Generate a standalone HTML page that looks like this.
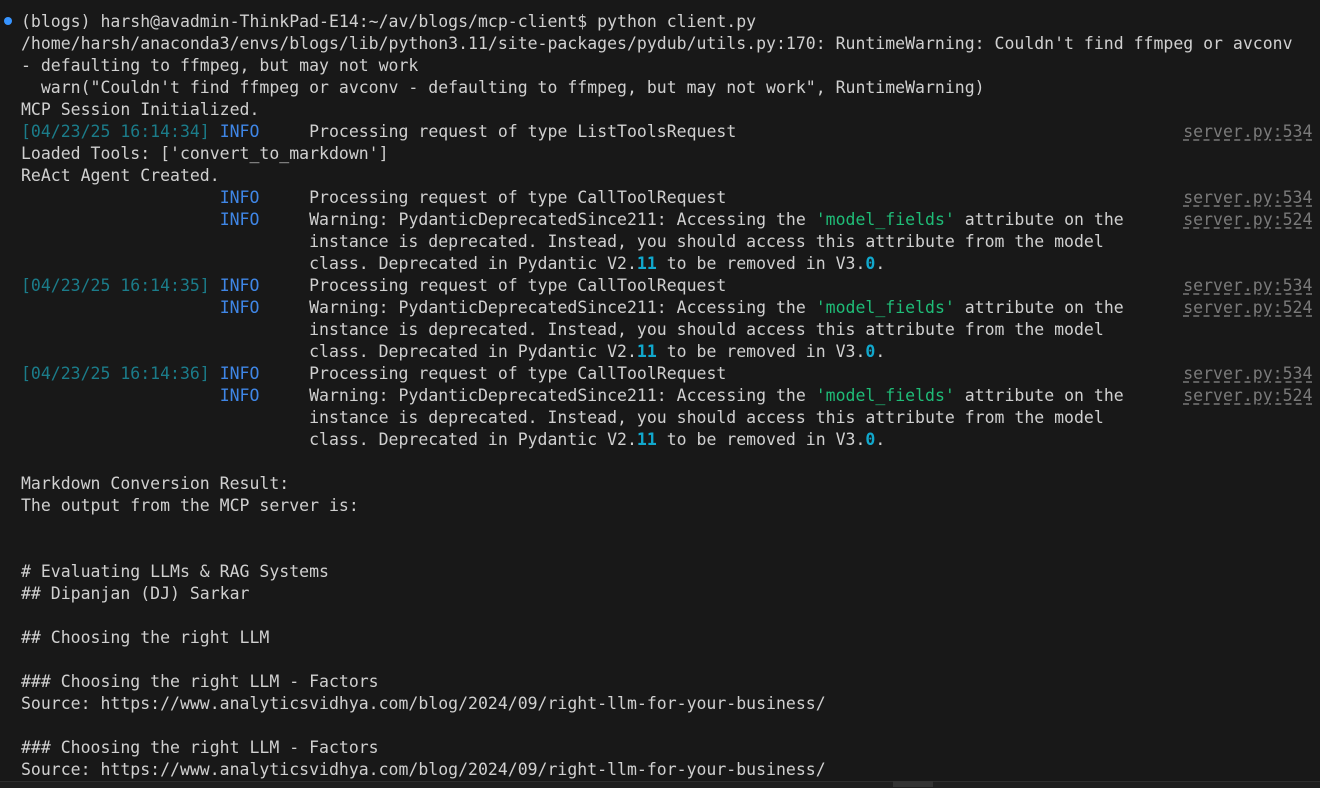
<!DOCTYPE html>
<html><head><meta charset="utf-8"><style>
html,body{margin:0;padding:0;background:#181818;width:1320px;height:787px;overflow:hidden}
pre{position:absolute;left:21px;top:11px;margin:0;font-family:"DejaVu Sans Mono","Liberation Mono",monospace;font-size:16.5px;line-height:22px;color:#d0d0d0;white-space:pre}
.l{position:relative;height:22px}
.t{color:#1b7c8a}.i{color:#3f86e6}.g{color:#1fbd78}.c{color:#11a8cd;font-weight:bold}
.s{position:absolute;left:117ch;top:0;color:#7a7a7a;text-decoration:underline dashed #6a6a6a;text-underline-offset:3px}
.dot{position:absolute;left:4px;top:17px;width:8px;height:8px;border-radius:50%;background:#3794ff}
.bar{position:absolute;left:0;top:781px;width:1320px;height:6px;background:#1f1f1f;border-top:1px solid #2e2e2e}
.tab{position:absolute;left:893px;top:781px;width:40px;height:6px;background:#333}
</style></head><body>
<div class="dot"></div>
<pre><div class="l">(blogs) harsh@avadmin-ThinkPad-E14:~/av/blogs/mcp-client$ python client.py</div><div class="l">/home/harsh/anaconda3/envs/blogs/lib/python3.11/site-packages/pydub/utils.py:170: RuntimeWarning: Couldn't find ffmpeg or avconv</div><div class="l">- defaulting to ffmpeg, but may not work</div><div class="l">  warn("Couldn't find ffmpeg or avconv - defaulting to ffmpeg, but may not work", RuntimeWarning)</div><div class="l">MCP Session Initialized.</div><div class="l"><span class="t">[04/23/25 16:14:34]</span> <span class="i">INFO</span>     Processing request of type ListToolsRequest<span class="s">server.py:534</span></div><div class="l">Loaded Tools: ['convert_to_markdown']</div><div class="l">ReAct Agent Created.</div><div class="l">                    <span class="i">INFO</span>     Processing request of type CallToolRequest<span class="s">server.py:534</span></div><div class="l">                    <span class="i">INFO</span>     Warning: PydanticDeprecatedSince211: Accessing the <span class="g">'model_fields'</span> attribute on the<span class="s">server.py:524</span></div><div class="l">                             instance is deprecated. Instead, you should access this attribute from the model</div><div class="l">                             class. Deprecated in Pydantic V2.<span class="c">11</span> to be removed in V3.<span class="c">0</span>.</div><div class="l"><span class="t">[04/23/25 16:14:35]</span> <span class="i">INFO</span>     Processing request of type CallToolRequest<span class="s">server.py:534</span></div><div class="l">                    <span class="i">INFO</span>     Warning: PydanticDeprecatedSince211: Accessing the <span class="g">'model_fields'</span> attribute on the<span class="s">server.py:524</span></div><div class="l">                             instance is deprecated. Instead, you should access this attribute from the model</div><div class="l">                             class. Deprecated in Pydantic V2.<span class="c">11</span> to be removed in V3.<span class="c">0</span>.</div><div class="l"><span class="t">[04/23/25 16:14:36]</span> <span class="i">INFO</span>     Processing request of type CallToolRequest<span class="s">server.py:534</span></div><div class="l">                    <span class="i">INFO</span>     Warning: PydanticDeprecatedSince211: Accessing the <span class="g">'model_fields'</span> attribute on the<span class="s">server.py:524</span></div><div class="l">                             instance is deprecated. Instead, you should access this attribute from the model</div><div class="l">                             class. Deprecated in Pydantic V2.<span class="c">11</span> to be removed in V3.<span class="c">0</span>.</div><div class="l"></div><div class="l">Markdown Conversion Result:</div><div class="l">The output from the MCP server is:</div><div class="l"></div><div class="l"></div><div class="l"># Evaluating LLMs &amp; RAG Systems</div><div class="l">## Dipanjan (DJ) Sarkar</div><div class="l"></div><div class="l">## Choosing the right LLM</div><div class="l"></div><div class="l">### Choosing the right LLM - Factors</div><div class="l">Source: https://www.analyticsvidhya.com/blog/2024/09/right-llm-for-your-business/</div><div class="l"></div><div class="l">### Choosing the right LLM - Factors</div><div class="l">Source: https://www.analyticsvidhya.com/blog/2024/09/right-llm-for-your-business/</div></pre>
<div class="bar"></div><div class="tab"></div>
</body></html>
